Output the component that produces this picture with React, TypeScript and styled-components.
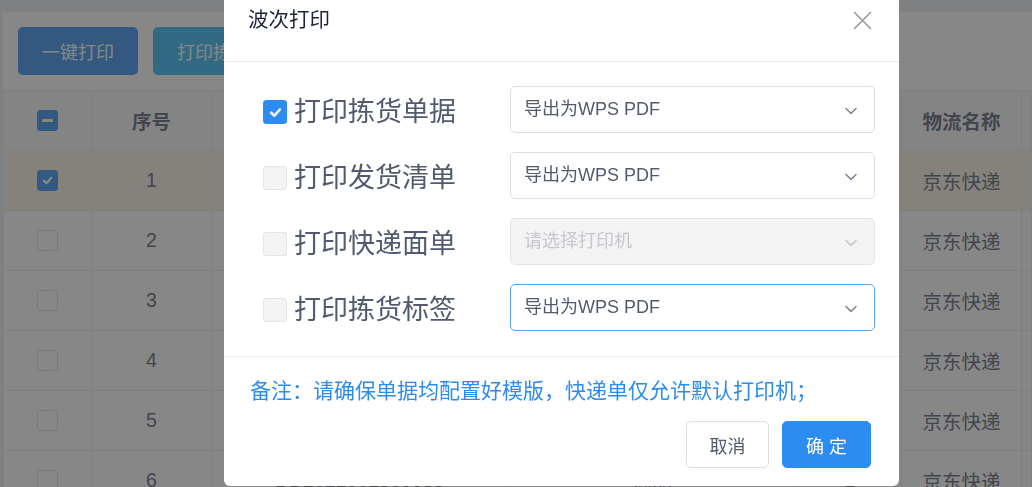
import React from "react";
import styled, { createGlobalStyle } from "styled-components";

const GlobalStyle = createGlobalStyle`
  html, body { margin: 0; padding: 0; }
  body {
    width: 1032px;
    height: 487px;
    overflow: hidden;
    background: #eceef1;
    font-family: "Liberation Sans", "Noto Sans CJK SC", sans-serif;
    color: #515a6e;
  }
`;

const Page = styled.div`
  box-sizing: border-box;
  height: 487px;
  padding: 12px 0 0 3px;
`;

const Panel = styled.div`
  background: #fff;
  height: 100%;
  overflow: hidden;
`;

const Toolbar = styled.div`
  display: flex;
  gap: 15px;
  padding: 15px;
`;

const ToolButton = styled.button<{ $tone: "primary" | "info" }>`
  min-width: 120px;
  height: 48px;
  border: none;
  border-radius: 5px;
  background: ${(p) => (p.$tone === "primary" ? "#2d8cf0" : "#2db7f5")};
  color: #fff;
  font-family: inherit;
  font-size: 18px;
  padding: 0 24px;
  white-space: nowrap;
`;

const Table = styled.div`
  border-top: 1px solid #e8eaec;
  border-left: 1px solid #e8eaec;
`;

const Row = styled.div<{ $head?: boolean; $active?: boolean }>`
  display: grid;
  grid-template-columns: 88px 120px 296px 290px 104px 120px 1fr;
  height: 60px;
  background: ${(p) => (p.$head ? "#f8f8f9" : p.$active ? "#fbf1e2" : "#fff")};
  font-weight: ${(p) => (p.$head ? 700 : 400)};
`;

const Cell = styled.div`
  display: flex;
  align-items: center;
  justify-content: center;
  border-right: 1px solid #e8eaec;
  border-bottom: 1px solid #e8eaec;
  font-size: 19.5px;
  white-space: nowrap;
  overflow: hidden;
`;

const TableBox = styled.span<{ $state: "on" | "off" | "some" }>`
  box-sizing: border-box;
  width: 21px;
  height: 21px;
  border-radius: 3px;
  display: inline-flex;
  align-items: center;
  justify-content: center;
  background: ${(p) => (p.$state === "off" ? "#fff" : "#2d8cf0")};
  border: 1px solid ${(p) => (p.$state === "off" ? "#dcdee2" : "#2d8cf0")};
`;

const Mask = styled.div`
  position: fixed;
  inset: 0;
  background: rgba(55, 55, 55, 0.6);
`;

const Modal = styled.div`
  position: fixed;
  left: 224px;
  top: -21px;
  width: 675px;
  background: #fff;
  border-radius: 6px;
  overflow: hidden;
`;

const ModalHeader = styled.div`
  box-sizing: border-box;
  height: 83px;
  padding: 0 27px 0 24px;
  display: flex;
  align-items: center;
  justify-content: space-between;
  border-bottom: 1px solid #e8eaec;
`;

const Title = styled.div`
  font-size: 20.5px;
  line-height: 30px;
  color: #1c2438;
`;

const CloseButton = styled.button`
  width: 20px;
  height: 20px;
  border: none;
  background: none;
  padding: 0;
  display: flex;
  align-items: center;
  justify-content: center;
`;

const ModalBody = styled.div`
  padding: 24px 24px 25px 39px;
  display: flex;
  flex-direction: column;
  gap: 19px;
`;

const OptionRow = styled.div`
  display: flex;
  align-items: center;
  height: 47px;
`;

const OptionLabel = styled.label`
  width: 247px;
  flex-shrink: 0;
  display: flex;
  align-items: center;
  gap: 7px;
  margin-top: 5px;
`;

const CheckBox = styled.span<{ $checked?: boolean }>`
  box-sizing: border-box;
  width: 24px;
  height: 24px;
  border-radius: 3px;
  display: inline-flex;
  align-items: center;
  justify-content: center;
  background: ${(p) => (p.$checked ? "#2d8cf0" : "#f3f3f3")};
  border: 1px solid ${(p) => (p.$checked ? "#2d8cf0" : "#e3e5e8")};
`;

const LabelText = styled.span`
  font-size: 27px;
  line-height: 32px;
  color: #515a6e;
  white-space: nowrap;
`;

const Select = styled.div<{ $disabled?: boolean; $focused?: boolean }>`
  box-sizing: border-box;
  flex: 1;
  height: 47px;
  border-radius: 5px;
  border: 1px solid
    ${(p) => (p.$focused ? "#57a3f3" : p.$disabled ? "#e3e5e8" : "#dcdee2")};
  background: ${(p) => (p.$disabled ? "#f3f3f3" : "#fff")};
  color: ${(p) => (p.$disabled ? "#c5c8ce" : "#515a6e")};
  display: flex;
  align-items: center;
  justify-content: space-between;
  padding: 0 17px 2px 13px;
  font-size: 18px;
`;

const SelectValue = styled.span`
  line-height: 24px;
`;

const ChevronWrap = styled.span`
  display: flex;
  margin-top: 4px;
`;

const ModalFooter = styled.div`
  border-top: 1px solid #e8eaec;
  padding: 19px 28px 18px 26px;
`;

const Note = styled.div`
  font-size: 21px;
  line-height: 30px;
  color: #2d8cf0;
  white-space: nowrap;
`;

const Actions = styled.div`
  display: flex;
  justify-content: flex-end;
  gap: 13px;
  margin-top: 15px;
`;

const ActionButton = styled.button<{ $primary?: boolean }>`
  box-sizing: border-box;
  height: 47px;
  width: ${(p) => (p.$primary ? "89px" : "83px")};
  border-radius: 5px;
  border: 1px solid ${(p) => (p.$primary ? "#2d8cf0" : "#dcdee2")};
  background: ${(p) => (p.$primary ? "#2d8cf0" : "#fff")};
  color: ${(p) => (p.$primary ? "#fff" : "#515a6e")};
  font-family: inherit;
  font-size: 18px;
  padding: 0;
`;

const Check = ({ size = 14 }: { size?: number }) => (
  <svg width={size} height={size} viewBox="0 0 14 14">
    <polyline
      points="3,7.2 6,10 11,4.2"
      fill="none"
      stroke="#fff"
      strokeWidth="2.4"
      strokeLinecap="round"
      strokeLinejoin="round"
    />
  </svg>
);

const Chevron = ({ color }: { color: string }) => (
  <svg width="12" height="8" viewBox="0 0 12 8">
    <polyline
      points="1,1.5 6,6.3 11,1.5"
      fill="none"
      stroke={color}
      strokeWidth="1.6"
      strokeLinecap="round"
      strokeLinejoin="round"
    />
  </svg>
);

const rows = [1, 2, 3, 4, 5, 6];

const options = [
  { label: "打印拣货单据", checked: true, value: "导出为WPS PDF" },
  { label: "打印发货清单", checked: false, value: "导出为WPS PDF" },
  { label: "打印快递面单", checked: false, value: "请选择打印机", disabled: true },
  { label: "打印拣货标签", checked: false, value: "导出为WPS PDF", focused: true },
];

export default function App() {
  return (
    <>
      <GlobalStyle />
      <Page>
        <Panel>
          <Toolbar>
            <ToolButton $tone="primary">一键打印</ToolButton>
            <ToolButton $tone="info">打印拣货单</ToolButton>
          </Toolbar>
          <Table>
            <Row $head>
              <Cell>
                <TableBox $state="some">
                  <svg width="11" height="3" viewBox="0 0 11 3">
                    <rect width="11" height="3" rx="1" fill="#fff" />
                  </svg>
                </TableBox>
              </Cell>
              <Cell>序号</Cell>
              <Cell>订单编号</Cell>
              <Cell>商品</Cell>
              <Cell>数量</Cell>
              <Cell>物流名称</Cell>
              <Cell />
            </Row>
            {rows.map((n) => (
              <Row key={n} $active={n === 1}>
                <Cell>
                  <TableBox $state={n === 1 ? "on" : "off"}>
                    {n === 1 && <Check size={13} />}
                  </TableBox>
                </Cell>
                <Cell>{n}</Cell>
                <Cell>DD20210615{n}0088</Cell>
                <Cell>商品</Cell>
                <Cell>1</Cell>
                <Cell>京东快递</Cell>
                <Cell />
              </Row>
            ))}
          </Table>
        </Panel>
      </Page>
      <Mask />
      <Modal>
        <ModalHeader>
          <Title>波次打印</Title>
          <CloseButton aria-label="关闭">
            <svg width="19" height="19" viewBox="0 0 19 19">
              <path
                d="M1.5 1.5 L17.5 17.5 M17.5 1.5 L1.5 17.5"
                stroke="#999"
                strokeWidth="1.6"
                strokeLinecap="round"
              />
            </svg>
          </CloseButton>
        </ModalHeader>
        <ModalBody>
          {options.map((o) => (
            <OptionRow key={o.label}>
              <OptionLabel>
                <CheckBox $checked={o.checked}>{o.checked && <Check size={15} />}</CheckBox>
                <LabelText>{o.label}</LabelText>
              </OptionLabel>
              <Select $disabled={o.disabled} $focused={o.focused}>
                <SelectValue>{o.value}</SelectValue>
                <ChevronWrap>
                  <Chevron color={o.disabled ? "#c5c8ce" : "#808695"} />
                </ChevronWrap>
              </Select>
            </OptionRow>
          ))}
        </ModalBody>
        <ModalFooter>
          <Note>备注：请确保单据均配置好模版，快递单仅允许默认打印机；</Note>
          <Actions>
            <ActionButton>取消</ActionButton>
            <ActionButton $primary>确 定</ActionButton>
          </Actions>
        </ModalFooter>
      </Modal>
    </>
  );
}
